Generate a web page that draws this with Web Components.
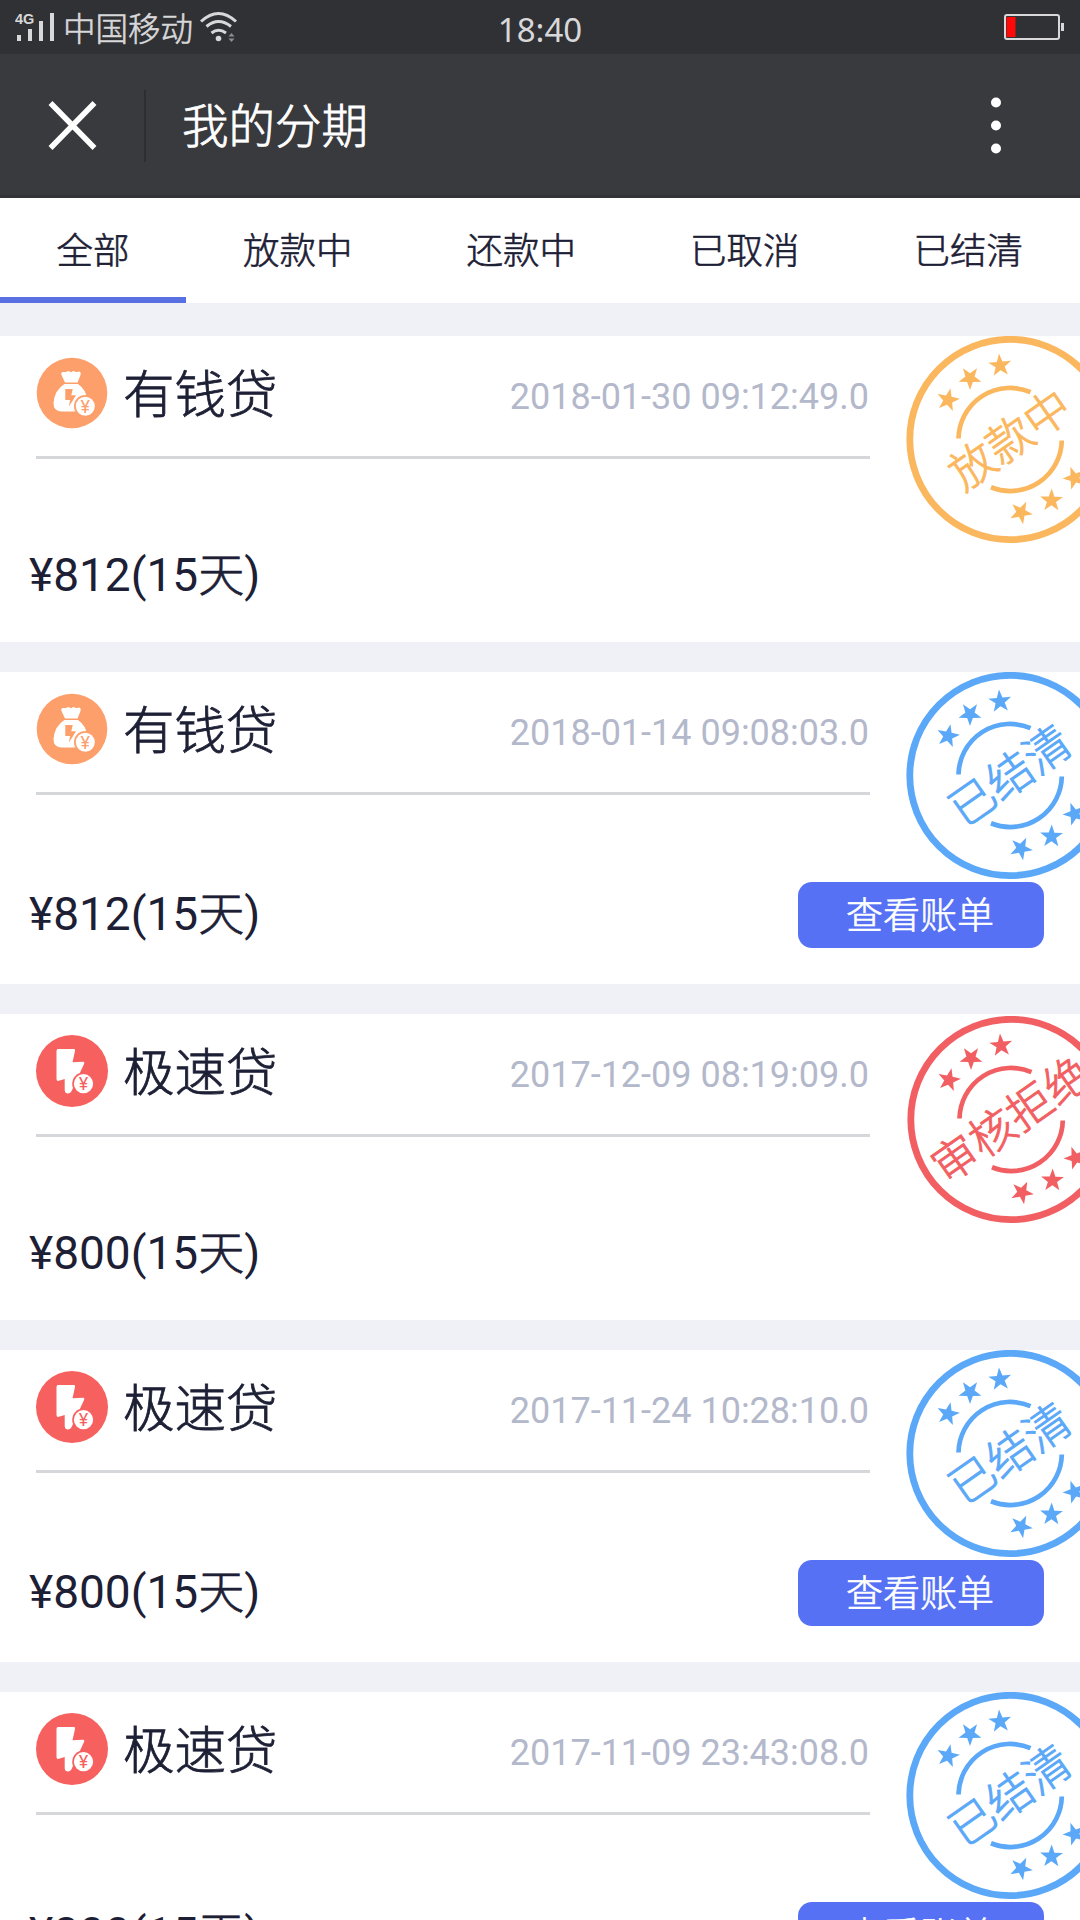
<!DOCTYPE html>
<html lang="zh-CN">
<head>
<meta charset="utf-8">
<title>我的分期</title>
<style>
body {
  margin: 0;
  width: 1080px;
  height: 1920px;
  overflow: hidden;
  background: #f0f1f7;
  color: #1d2035;
  font-family: Roboto, "Noto Sans CJK SC", sans-serif;
}
</style>
</head>
<body>
<installment-app></installment-app>

<script>
function define(name, html, setup) {
  const template = document.createElement("template");
  template.innerHTML = html;
  window.customElements.define(name, class extends HTMLElement {
    constructor() {
      super();
      this.attachShadow({ mode: "open" });
      this.shadowRoot.appendChild(template.content.cloneNode(true));
    }

    connectedCallback() {
      if (setup) {
        setup(this, this.shadowRoot);
      }
    }
  });
}

define("status-bar", `
<style>
:host {
  display: grid;
  grid-template-columns: 1fr auto 1fr;
  align-items: center;
  height: 54px;
  box-sizing: border-box;
  padding: 0 15px;
  background: #303134;
  color: #d8d8da;
}
.left { display: flex; align-items: center; }
.carrier {
  font: 300 32.5px/52px "Noto Sans CJK SC", sans-serif;
  -webkit-text-stroke: .6px currentColor;
  margin-left: 8px;
}
.wifi { margin-left: 7px; }
.time { font: 400 33px/49px "Noto Sans", sans-serif; padding-top: 5px; height: 49px; line-height: 49px; }
.battery { justify-self: end; }
svg { display: block; }
</style>
<div class="left">
  <svg width="40" height="54" viewBox="0 0 40 54" fill="#d8d8da">
    <text x="0" y="24" font-family="Liberation Sans, sans-serif" font-weight="700" font-size="14.5">4G</text>
    <path d="M2 35h4v6H2zM13 29h4v12h-4zM24 21h4v20h-4zM35 13h4v28h-4z"/>
  </svg>
  <span class="carrier">中国移动</span>
  <svg class="wifi" width="40" height="54" viewBox="0 0 40 54" fill="none" stroke="#d8d8da" stroke-width="3">
    <path d="M1 21.500Q18.500 5.500 36 21.500M6.500 26.500Q18.500 16.500 31 26.500M11.500 33Q18.500 27.500 26 33"/>
    <circle cx="18.500" cy="38.500" r="2.800" fill="#d8d8da" stroke="none"/>
    <path d="M28.500 36.500l3-3.500 3 3.500zM28.500 38.500l3 3.500 3-3.500z" fill="#8d8e90" stroke="none"/>
  </svg>
</div>
<span class="time">18:40</span>
<svg class="battery" width="61" height="54" viewBox="0 0 61 54">
  <rect x="1" y="15" width="54" height="24" rx="2" fill="none" stroke="#d8d8da" stroke-width="2"/>
  <path d="M2.500 17h9v20h-9z" fill="#fe0808"/>
  <path d="M57 23h3v8h-3z" fill="#d8d8da"/>
</svg>`);

define("nav-bar", `
<style>
:host {
  display: flex;
  align-items: center;
  height: 144px;
  box-sizing: border-box;
  border-bottom: 3px solid #343338;
  background: #393a3e;
  color: #fff;
}
.close { margin-left: 48px; }
.divider { width: 2px; height: 72px; margin: 3px 36px 0 47px; background: #2d2e31; }
.title {
  flex: 1;
  margin-top: -3px;
  font: 300 46.5px/70px "Noto Sans CJK SC", sans-serif;
  -webkit-text-stroke: .8px currentColor;
}
.more { margin-right: 79px; }
</style>
<svg class="close" width="49" height="50" viewBox="0 0 49 50" stroke="#fff" stroke-width="5.500">
  <path d="M2.500 3l44 45M46.500 3l-44 45"/>
</svg>
<div class="divider"></div>
<div class="title"><slot></slot></div>
<svg class="more" width="10" height="60" viewBox="0 0 10 60" fill="#fff">
  <circle cx="5" cy="7.500" r="5"/><circle cx="5" cy="30.500" r="5"/><circle cx="5" cy="53.500" r="5"/>
</svg>`);

define("tab-bar", `
<style>
:host {
  display: flex;
  height: 105px;
  background: #fff;
}
::slotted(*) {
  flex: 1 1 auto;
  box-sizing: border-box;
  border-bottom: 6px solid transparent;
  text-align: center;
  font: 300 36.5px/102px "Noto Sans CJK SC", sans-serif;
  -webkit-text-stroke: .6px currentColor;
}
::slotted([selected]) {
  flex: 0 0 186px;
  border-color: #5970e2;
}
</style>
<slot></slot>`);

const ICONS = {
  bag: `<circle cx="36" cy="36" r="35.300" fill="#fd9f6a"/>
    <path fill="#fff" d="M29 25.500L25.500 18Q24.500 14.500 28 15Q30 15.500 31 14.500Q33 13 35 15.500Q37 13 39 14.500Q40.500 15.500 42.500 14.500Q45.500 14.500 44.500 18L41.500 25.500zM28.500 27H42Q50 32.500 51.500 43L40 54.500H25Q17.500 54 17.500 46Q18.500 33 28.500 27z"/>
    <path fill="#fd9f6a" d="M29.300 32h7.400l-1.400 6.300H40L33 49.500l1-6.500h-4.700z"/>
    <circle cx="49.300" cy="49.300" r="11.300" fill="#fd9f6a"/>
    <circle cx="49.300" cy="49.300" r="9.500" fill="#fff"/>
    <text x="49.300" y="55.500" text-anchor="middle" font-size="18" fill="#fd9f6a">¥</text>`,
  bolt: `<circle cx="36" cy="36" r="36" fill="#f66160"/>
    <path fill="#fff" d="M22 14H38Q39.500 14 39 16L36.500 27.300L47 26.800Q49 27 48 29L36.500 54Q35 58.500 31.500 58.500Q28.700 58 28.700 55V44L22 46Q20.500 46 20.500 44V16Q20.500 14 22 14z"/>
    <circle cx="47.500" cy="48.700" r="11.300" fill="#f66160"/>
    <circle cx="47.500" cy="48.700" r="9.600" fill="#fff"/>
    <text x="47.500" y="55" text-anchor="middle" font-size="18" fill="#f66160">¥</text>`
};

define("loan-icon", `
<style>
:host { display: block; width: 72px; height: 72px; }
svg { display: block; }
</style>
<svg width="72" height="72" viewBox="0 0 72 72" font-family="Roboto, sans-serif"></svg>`,
(el, root) => {
  root.querySelector("svg").innerHTML = ICONS[el.getAttribute("name")];
});

// x, y, rotation, measured from the centre of the stamp
const STARS = [
  [-62, -39.5, 12], [-40, -61.5, 180], [-10, -74, -5],
  [11, 73, 170], [41.500, 61, 1], [64.500, 38.500, -20]
];

function starPoints() {
  const points = [];
  for (let i = 0; i < 10; i++) {
    const r = i % 2 ? 4.8 : 12;
    const a = i * Math.PI / 5;
    points.push((r * Math.sin(a)).toFixed(2) + "," + (-r * Math.cos(a)).toFixed(2));
  }
  return points.join(" ");
}

define("status-stamp", `
<style>
:host { display: block; width: 208px; height: 208px; color: #5aa8f7; }
:host([kind="pending"]) { color: #fbb75e; }
:host([kind="rejected"]) { color: #f25f62; }
svg { display: block; }
</style>
<svg width="208" height="208" viewBox="-104 -103.500 208 208" fill="none" stroke="currentColor">
  <circle r="100.200" stroke-width="6.800"/>
  <path d="M-51.500 -1A51.500 51.500 0 0 1 20.500 -47.300M51.800 1A51.500 51.500 0 0 1 -19 47.800" stroke-width="4.700"/>
  <g class="stars" fill="currentColor" stroke="none"></g>
  <text transform="rotate(-35)" y="16.500" text-anchor="middle" fill="currentColor" stroke-width=".9"
    font-family="Noto Sans CJK SC, sans-serif" font-weight="300" font-size="45.500"></text>
</svg>`,
(el, root) => {
  root.querySelector(".stars").innerHTML = STARS.map(([x, y, r]) =>
    `<polygon transform="translate(${x} ${y}) rotate(${r})" points="${starPoints()}"/>`).join("");
  root.querySelector("text").textContent = el.getAttribute("label");
});

define("bill-button", `
<style>
:host {
  display: block;
  width: 246px;
  height: 66px;
  box-sizing: border-box;
  padding-right: 2px;
  border-radius: 14px;
  background: #5671f4;
  color: #fff;
  text-align: center;
  font: 300 37px/62px "Noto Sans CJK SC", sans-serif;
  -webkit-text-stroke: .6px currentColor;
}
</style>
<slot></slot>`);

define("loan-card", `
<style>
:host {
  display: block;
  height: 306px;
  overflow: hidden;
  background: #fff;
}
:host([bill]) { height: 312px; }
.top { display: flex; height: 210px; padding-left: 36px; }
.head {
  display: flex;
  align-items: center;
  flex: 0 0 834px;
  height: 123px;
  box-sizing: border-box;
  padding-bottom: 6px;
  border-bottom: 3px solid #d5d7da;
}
.name {
  flex: 1;
  margin: -5px 0 0 15px;
  font: 300 51.500px/70px "Noto Sans CJK SC", sans-serif;
  -webkit-text-stroke: .8px currentColor;
}
.date { margin: 7px 1px 0 0; font-size: 36px; line-height: 44px; color: #b3b8cb; }
status-stamp { flex: none; margin-left: 36px; }
:host([kind="rejected"]) status-stamp { margin: 2px 0 0 37px; }
.bottom {
  display: flex;
  justify-content: space-between;
  height: 66px;
  padding: 0 36px 0 29px;
}
.amount { font-size: 46px; line-height: 58px; }
::slotted(span) { font-weight: 300; -webkit-text-stroke: .7px currentColor; }
:host([bill]) .amount { line-height: 65px; }
bill-button { display: none; }
:host([bill]) bill-button { display: block; }
</style>
<div class="top">
  <div class="head">
    <loan-icon></loan-icon>
    <div class="name"></div>
    <div class="date"></div>
  </div>
  <status-stamp></status-stamp>
</div>
<div class="bottom">
  <div class="amount"><slot></slot></div>
  <bill-button>查看账单</bill-button>
</div>`,
(el, root) => {
  const stamp = root.querySelector("status-stamp");
  stamp.setAttribute("kind", el.getAttribute("kind"));
  stamp.shadowRoot.querySelector("text").textContent = el.getAttribute("status");
  stamp.setAttribute("label", el.getAttribute("status"));
  const icon = root.querySelector("loan-icon");
  icon.shadowRoot.querySelector("svg").innerHTML = ICONS[el.getAttribute("icon")];
  icon.setAttribute("name", el.getAttribute("icon"));
  root.querySelector(".name").textContent = el.getAttribute("name");
  root.querySelector(".date").textContent = el.getAttribute("date");
});

define("installment-app", `
<style>
:host { display: block; }
.cards {
  display: flex;
  flex-direction: column;
  gap: 30px;
  padding-top: 33px;
}
loan-card { flex: none; }
</style>
<status-bar></status-bar>
<nav-bar>我的分期</nav-bar>
<tab-bar>
  <div selected>全部</div>
  <div>放款中</div>
  <div>还款中</div>
  <div>已取消</div>
  <div>已结清</div>
</tab-bar>
<div class="cards">
  <loan-card icon="bag" name="有钱贷" date="2018-01-30 09:12:49.0" kind="pending" status="放款中">¥812(15<span>天</span>)</loan-card>
  <loan-card icon="bag" name="有钱贷" date="2018-01-14 09:08:03.0" kind="settled" status="已结清" bill>¥812(15<span>天</span>)</loan-card>
  <loan-card icon="bolt" name="极速贷" date="2017-12-09 08:19:09.0" kind="rejected" status="审核拒绝">¥800(15<span>天</span>)</loan-card>
  <loan-card icon="bolt" name="极速贷" date="2017-11-24 10:28:10.0" kind="settled" status="已结清" bill>¥800(15<span>天</span>)</loan-card>
  <loan-card icon="bolt" name="极速贷" date="2017-11-09 23:43:08.0" kind="settled" status="已结清" bill>¥800(15<span>天</span>)</loan-card>
</div>`);
</script>
</body>
</html>
